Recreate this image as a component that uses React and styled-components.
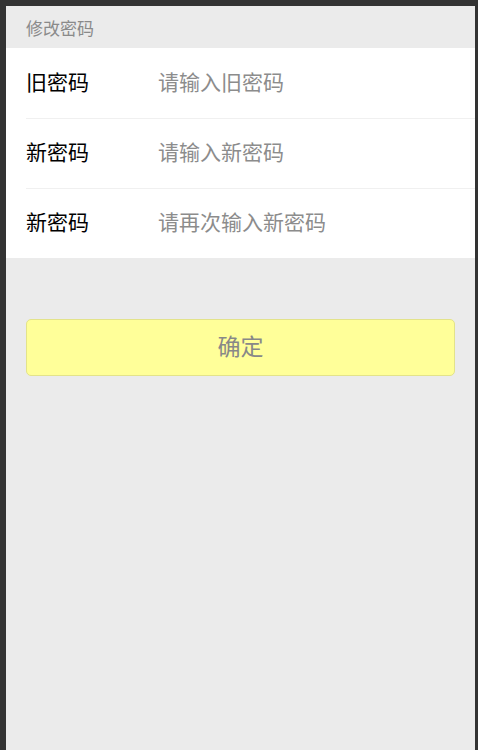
import React from 'react';
import styled, { createGlobalStyle } from 'styled-components';

const GlobalStyle = createGlobalStyle`
  html, body {
    margin: 0;
    padding: 0;
    background: #333333;
  }
  * { box-sizing: border-box; }
`;

const Frame = styled.div`
  padding: 6px 3px 0 6px;
  background: #333333;
  height: 750px;
  overflow: hidden;
`;

const Page = styled.div`
  background: #ebebeb;
  height: 744px;
  font-family: "Noto Sans CJK SC", "Noto Sans", sans-serif;
`;

const SectionTitle = styled.div`
  height: 42px;
  padding: 0 20px;
  display: flex;
  align-items: center;
  font-size: 17px;
  color: #8a8a8a;
`;

const FormGroup = styled.div`
  background: #fff;
`;

const Row = styled.label`
  display: flex;
  align-items: center;
  height: 70px;
  padding-bottom: 5px;
  margin-left: 20px;
  border-top: ${(p) => (p.first ? 'none' : '1px solid #f0f0f0')};
`;

const Label = styled.span`
  width: 132px;
  font-size: 21px;
  line-height: 28px;
  color: #000;
`;

const Input = styled.input`
  flex: 1;
  border: none;
  outline: none;
  background: transparent;
  font-family: inherit;
  font-size: 21px;
  line-height: 28px;
  color: #333;
  padding: 0;

  &::placeholder {
    color: #8c8c8c;
  }
`;

const Actions = styled.div`
  padding: 61px 20px 0;
`;

const SubmitButton = styled.button`
  width: 100%;
  height: 57px;
  padding: 0 0 6px;
  background: #ffff99;
  border: 1px solid #e3e38a;
  border-radius: 5px;
  font-family: inherit;
  font-size: 23px;
  color: #888;
  cursor: pointer;
`;

const fields = [
  { label: '旧密码', placeholder: '请输入旧密码' },
  { label: '新密码', placeholder: '请输入新密码' },
  { label: '新密码', placeholder: '请再次输入新密码' },
];

export default function App() {
  return (
    <>
      <GlobalStyle />
      <Frame>
        <Page>
          <SectionTitle>修改密码</SectionTitle>
          <FormGroup>
            {fields.map((f, i) => (
              <Row key={i} first={i === 0}>
                <Label>{f.label}</Label>
                <Input type="password" placeholder={f.placeholder} />
              </Row>
            ))}
          </FormGroup>
          <Actions>
            <SubmitButton>确定</SubmitButton>
          </Actions>
        </Page>
      </Frame>
    </>
  );
}
